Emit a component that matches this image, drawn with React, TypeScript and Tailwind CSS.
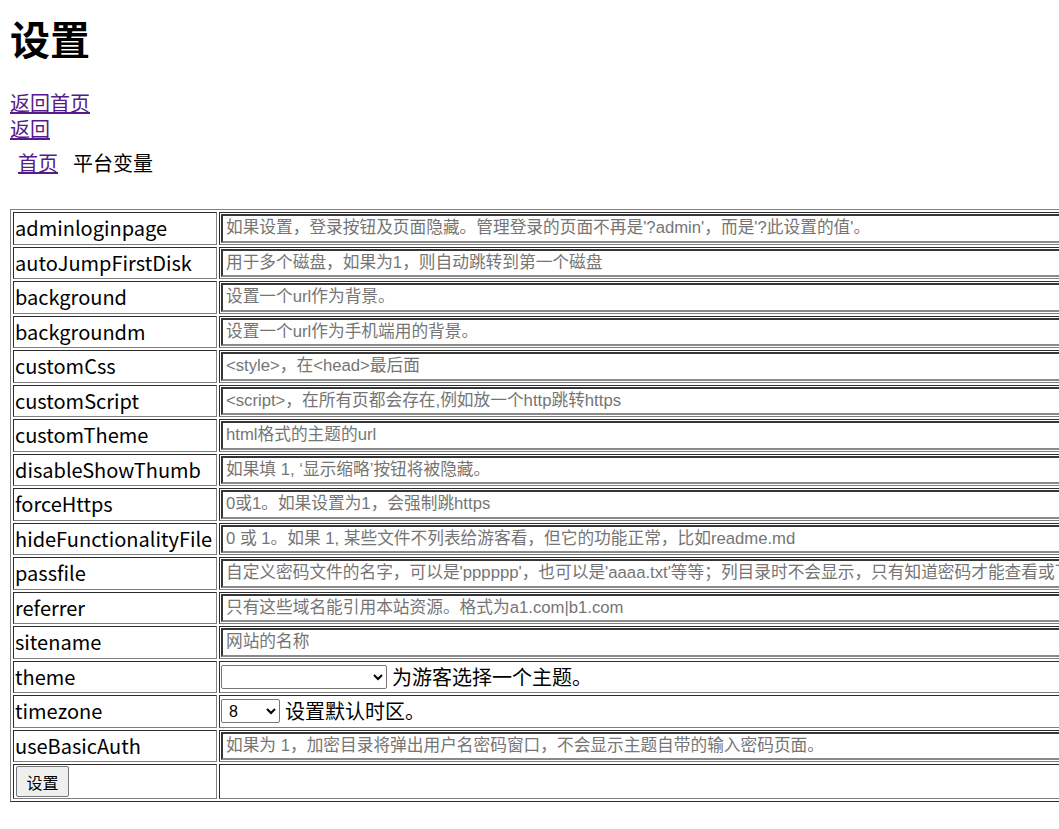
const rows: [string, string][] = [
  ["adminloginpage", "如果设置，登录按钮及页面隐藏。管理登录的页面不再是'?admin'，而是'?此设置的值'。"],
  ["autoJumpFirstDisk", "用于多个磁盘，如果为1，则自动跳转到第一个磁盘"],
  ["background", "设置一个url作为背景。"],
  ["backgroundm", "设置一个url作为手机端用的背景。"],
  ["customCss", "<style>，在<head>最后面"],
  ["customScript", "<script>，在所有页都会存在,例如放一个http跳转https"],
  ["customTheme", "html格式的主题的url"],
  ["disableShowThumb", "如果填 1, ‘显示缩略’按钮将被隐藏。"],
  ["forceHttps", "0或1。如果设置为1，会强制跳https"],
  ["hideFunctionalityFile", "0 或 1。如果 1, 某些文件不列表给游客看，但它的功能正常，比如readme.md"],
  ["passfile", "自定义密码文件的名字，可以是'pppppp'，也可以是'aaaa.txt'等等；列目录时不会显示，只有知道密码才能查看或下载此文件。"],
  ["referrer", "只有这些域名能引用本站资源。格式为a1.com|b1.com"],
  ["sitename", "网站的名称"],
];

const tdLabel =
  "border border-[#808080] [border-style:inset] p-[1px] w-[204px] whitespace-nowrap text-left align-middle";
const tdValue = "border border-[#808080] [border-style:inset] p-[1px] whitespace-nowrap align-middle";

const TextInput = ({ name, hint }: { name: string; hint: string }) => (
  <input
    name={name}
    placeholder={hint}
    className="block w-[880px] h-[28.5px] px-[3px] border-2 [border-style:inset] border-[#8a8a8a] bg-white text-[16.7px] text-black placeholder:text-[#757575] [font-family:'Liberation_Sans','Noto_Sans_CJK_SC',sans-serif]"
  />
);

export default function App() {
  return (
    <div className="w-[1059px] min-h-[829px] overflow-hidden bg-white text-black text-[20px] [font-family:'Noto_Sans_CJK_SC','Noto_Sans',sans-serif]">
      <div className="pl-[10px] pt-[12px] w-max">
        <h1 className="text-[40px] font-bold leading-[52px]">设置</h1>
        <div className="mt-[26px] flex flex-col items-start leading-[26px]">
          <a href="#" className="underline text-[#551a8b]">返回首页</a>
          <a href="#" className="underline text-[#551a8b]">返回</a>
        </div>
        <nav className="mt-[8px] flex gap-[15px] pl-[8px] leading-[26px]">
          <a href="#" className="underline text-[#551a8b]">首页</a>
          <span>平台变量</span>
        </nav>

        <form className="mt-[33px]" onSubmit={(e) => e.preventDefault()}>
          <table className="border border-[#808080] [border-style:outset] border-separate border-spacing-[2px]">
            <tbody>
              {rows.map(([k, hint]) => (
                <tr key={k}>
                  <td className={`${tdLabel} leading-[28.5px]`}>{k}</td>
                  <td className={tdValue}>
                    <TextInput name={k} hint={hint} />
                  </td>
                </tr>
              ))}
              <tr>
                <td className={`${tdLabel} leading-[28.5px]`}>theme</td>
                <td className={tdValue}>
                  <div className="flex items-center gap-[5px] h-[28.5px]">
                    <select className="w-[166px] h-[24px] text-[16px] border border-[#767676] rounded-[2px] bg-white [font-family:'Liberation_Sans',sans-serif]">
                      <option value=""></option>
                      <option value="classic">classic</option>
                    </select>
                    <span>为游客选择一个主题。</span>
                  </div>
                </td>
              </tr>
              <tr>
                <td className={`${tdLabel} leading-[28.5px]`}>timezone</td>
                <td className={tdValue}>
                  <div className="flex items-center gap-[5px] h-[28.5px]">
                    <select
                      defaultValue="8"
                      className="w-[59px] h-[24px] text-[16px] pl-[3px] border border-[#767676] rounded-[2px] bg-white [font-family:'Liberation_Sans',sans-serif]"
                    >
                      {["-12", "-8", "0", "8", "9", "12"].map((z) => (
                        <option key={z} value={z}>
                          {z}
                        </option>
                      ))}
                    </select>
                    <span>设置默认时区。</span>
                  </div>
                </td>
              </tr>
              <tr>
                <td className={`${tdLabel} leading-[28.5px]`}>useBasicAuth</td>
                <td className={tdValue}>
                  <TextInput
                    name="useBasicAuth"
                    hint="如果为 1，加密目录将弹出用户名密码窗口，不会显示主题自带的输入密码页面。"
                  />
                </td>
              </tr>
              <tr>
                <td className={`${tdLabel} py-[1px] pl-[2px]`}>
                  <button
                    type="submit"
                    className="block w-[53px] h-[31px] text-[16px] bg-[#efefef] border border-[#767676] rounded-[2px]"
                  >
                    设置
                  </button>
                </td>
                <td className={tdValue}></td>
              </tr>
            </tbody>
          </table>
        </form>
      </div>
    </div>
  );
}
